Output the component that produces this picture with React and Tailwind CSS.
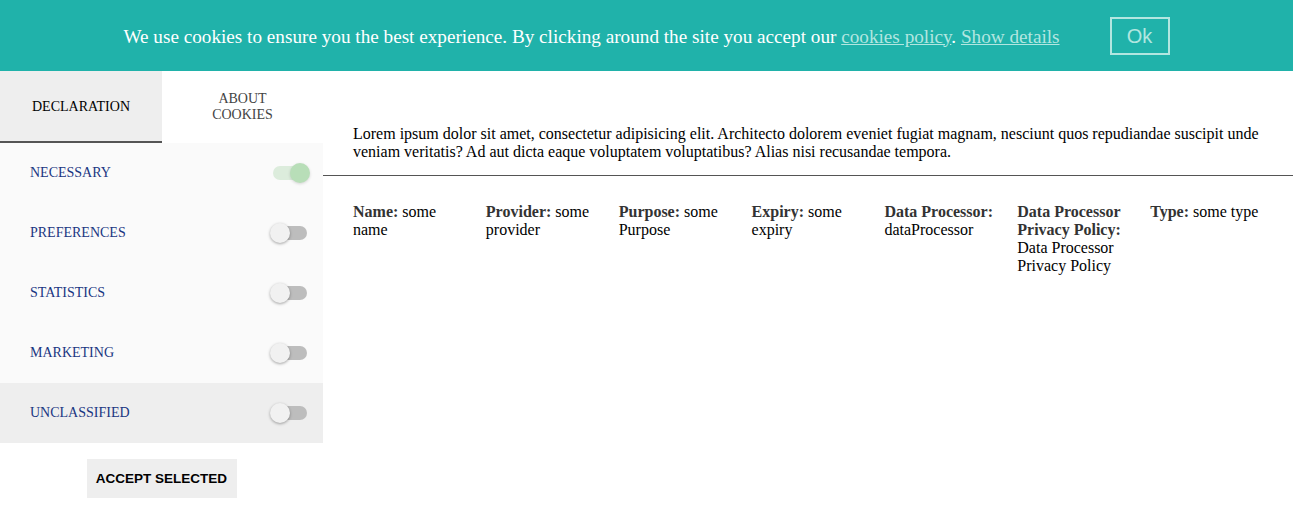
const CATEGORIES = [
  { id: 'necessary', label: 'NECESSARY', on: true },
  { id: 'preferences', label: 'PREFERENCES' },
  { id: 'statistics', label: 'STATISTICS' },
  { id: 'marketing', label: 'MARKETING' },
  { id: 'unclassified', label: 'UNCLASSIFIED', active: true },
];

const FIELDS = [
  { label: 'Name:', value: 'some name' },
  { label: 'Provider:', value: 'some provider' },
  { label: 'Purpose:', value: 'some Purpose' },
  { label: 'Expiry:', value: 'some expiry' },
  { label: 'Data Processor:', value: 'dataProcessor' },
  { label: 'Data Processor Privacy Policy:', value: 'Data Processor Privacy Policy' },
  { label: 'Type:', value: 'some type' },
];

function Toggle({ on }) {
  return (
    <div className="relative h-5 w-10">
      <div
        className={
          on
            ? 'absolute left-[3px] top-[3px] h-[14px] w-[34px] rounded-full bg-[#dcecdc]'
            : 'absolute left-[3px] top-[3px] h-[14px] w-[34px] rounded-full bg-[#bdbdbd]'
        }
      />
      <div
        className={
          on
            ? 'absolute left-5 top-0 h-5 w-5 rounded-full bg-[#b8deb8] shadow-[0_1px_3px_rgba(0,0,0,0.15)]'
            : 'absolute left-0 top-0 h-5 w-5 rounded-full bg-[#f1f1f1] shadow-[0_1px_3px_rgba(0,0,0,0.35)]'
        }
      />
    </div>
  );
}

export default function App() {
  return (
    <div className="min-h-[512px] bg-white font-['Liberation_Serif',serif]">
      <div className="flex h-[71px] items-center justify-center gap-[50px] bg-[#20b2aa]">
        <p className="mt-[3px] text-[19.2px] text-white">
          We use cookies to ensure you the best experience. By clicking around the site you accept our{' '}
          <a href="#" className="text-[#b2e6e0] underline">cookies policy</a>.{' '}
          <a href="#" className="text-[#b2e6e0] underline">Show details</a>
        </p>
        <button className="h-[38px] w-[60px] border-2 border-[#b2e6e0] font-['Liberation_Sans',sans-serif] text-[20px] text-[#b2e6e0]">
          Ok
        </button>
      </div>

      <div className="flex">
        <div className="w-[323px] shrink-0">
          <div className="flex h-[72px] text-[14px]">
            <div className="flex w-[162px] items-center justify-center border-b-2 border-[#555] bg-[#eeeeee] text-black">
              DECLARATION
            </div>
            <div className="flex flex-1 items-center justify-center text-center leading-4 text-[#444]">
              ABOUT
              <br />
              COOKIES
            </div>
          </div>
          <div className="bg-[#fafafa]">
            {CATEGORIES.map((c) => (
              <div
                key={c.id}
                className={
                  c.active
                    ? 'flex h-[60px] items-center justify-between bg-[#eeeeee] pl-[30px] pr-[13px]'
                    : 'flex h-[60px] items-center justify-between pl-[30px] pr-[13px]'
                }
              >
                <span className="-mt-0.5 text-[14px] text-[#1a3682]">{c.label}</span>
                <Toggle on={c.on} />
              </div>
            ))}
          </div>
          <div className="flex justify-center pt-4">
            <button className="h-[39px] w-[150px] bg-[#eeeeee] pt-px font-['Liberation_Sans',sans-serif] text-[13.5px] font-bold text-black">
              ACCEPT SELECTED
            </button>
          </div>
        </div>

        <div className="flex-1">
          <p className="px-[30px] pt-[54px] text-[16px] leading-[18px] text-black">
            Lorem ipsum dolor sit amet, consectetur adipisicing elit. Architecto dolorem eveniet fugiat magnam, nesciunt quos repudiandae suscipit unde veniam veritatis? Ad aut dicta eaque voluptatem voluptatibus? Alias nisi recusandae tempora.
          </p>
          <div className="mt-[14px] h-px bg-[#555]" />
          <div className="grid grid-cols-7 gap-x-5 px-[30px] pt-[27px] text-[16px] leading-[18px] text-black">
            {FIELDS.map((f) => (
              <div key={f.label}>
                <b className="text-[#333]">{f.label}</b> {f.value}
              </div>
            ))}
          </div>
        </div>
      </div>
    </div>
  );
}
